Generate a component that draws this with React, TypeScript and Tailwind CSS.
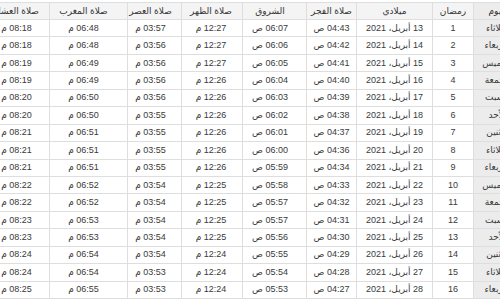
const days = [
  "الثلاثاء",
  "الأربعاء",
  "الخميس",
  "الجمعة",
  "السبت",
  "الأحد",
  "الاثنين",
];

const fajr = ["04:43", "04:42", "04:41", "04:40", "04:39", "04:38", "04:37", "04:36", "04:34", "04:33", "04:32", "04:31", "04:30", "04:29", "04:28", "04:27"];
const sunrise = ["06:07", "06:06", "06:05", "06:04", "06:03", "06:02", "06:01", "06:00", "05:59", "05:58", "05:57", "05:57", "05:56", "05:55", "05:54", "05:53"];
const dhuhr = ["12:27", "12:27", "12:27", "12:26", "12:26", "12:26", "12:26", "12:26", "12:26", "12:25", "12:25", "12:25", "12:25", "12:24", "12:24", "12:24"];
const asr = ["03:57", "03:56", "03:56", "03:56", "03:56", "03:55", "03:55", "03:55", "03:55", "03:54", "03:54", "03:54", "03:54", "03:54", "03:53", "03:53"];
const maghrib = ["06:48", "06:48", "06:49", "06:49", "06:50", "06:50", "06:51", "06:51", "06:51", "06:52", "06:52", "06:53", "06:53", "06:54", "06:54", "06:55"];
const isha = ["08:18", "08:18", "08:19", "08:19", "08:20", "08:20", "08:21", "08:21", "08:21", "08:22", "08:22", "08:23", "08:23", "08:24", "08:24", "08:25"];

const rows = fajr.map((_, i) => ({
  day: days[i % 7],
  ramadan: i + 1,
  date: `${13 + i} أبريل، 2021`,
  times: [
    `${fajr[i]} ص`,
    `${sunrise[i]} ص`,
    `${dhuhr[i]} م`,
    `${asr[i]} م`,
    `${maghrib[i]} م`,
    `${isha[i]} م`,
  ],
}));

const headers = [
  "اليوم",
  "رمضان",
  "ميلادي",
  "صلاة الفجر",
  "الشروق",
  "صلاة الظهر",
  "صلاة العصر",
  "صلاة المغرب",
  "صلاة العشاء",
];

const widths = ["w-[48px]", "w-[41px]", "w-[76px]", "w-[50px]", "w-[64px]", "w-[61px]", "w-[54px]", "w-[78px]", "w-[78px]"];

// text sits a little off-centre in some columns
const pads = ["", "", "", "", "pr-[9px]", "pr-[2px]", "pr-[8px]", "pr-[10px]", "pl-[12px]"];

const cell = "p-0 text-center border border-[#dedede] leading-none";

export default function App() {
  return (
    <div className="w-[500px] h-[300px] overflow-hidden bg-white pt-[2px]">
      <div dir="rtl" className="-mr-[22px] font-['Liberation_Sans','DejaVu_Sans',sans-serif] text-[9px] text-[#3a3a3a]">
        <table className="table-fixed border-collapse w-[550px]">
          <colgroup>
            {widths.map((w, i) => (
              <col key={i} className={w} />
            ))}
          </colgroup>
          <thead>
            <tr className="bg-[#f4f4f4]">
              {headers.map((h, i) => (
                <th
                  key={h}
                  className={`h-[17px] font-normal text-[#333] ${cell} ${pads[i]} ${i === 0 ? "bg-[#ececec]" : ""}`}
                >
                  {h}
                </th>
              ))}
            </tr>
          </thead>
          <tbody>
            {rows.map((r) => (
              <tr key={r.ramadan}>
                <td className={`h-[17.45px] bg-[#ececec] ${cell}`}>{r.day}</td>
                <td className={cell}>{r.ramadan}</td>
                <td className={cell}>{r.date}</td>
                {r.times.map((t, j) => (
                  <td key={j} className={`${cell} ${pads[j + 3]}`}>
                    {t}
                  </td>
                ))}
              </tr>
            ))}
          </tbody>
        </table>
      </div>
    </div>
  );
}
